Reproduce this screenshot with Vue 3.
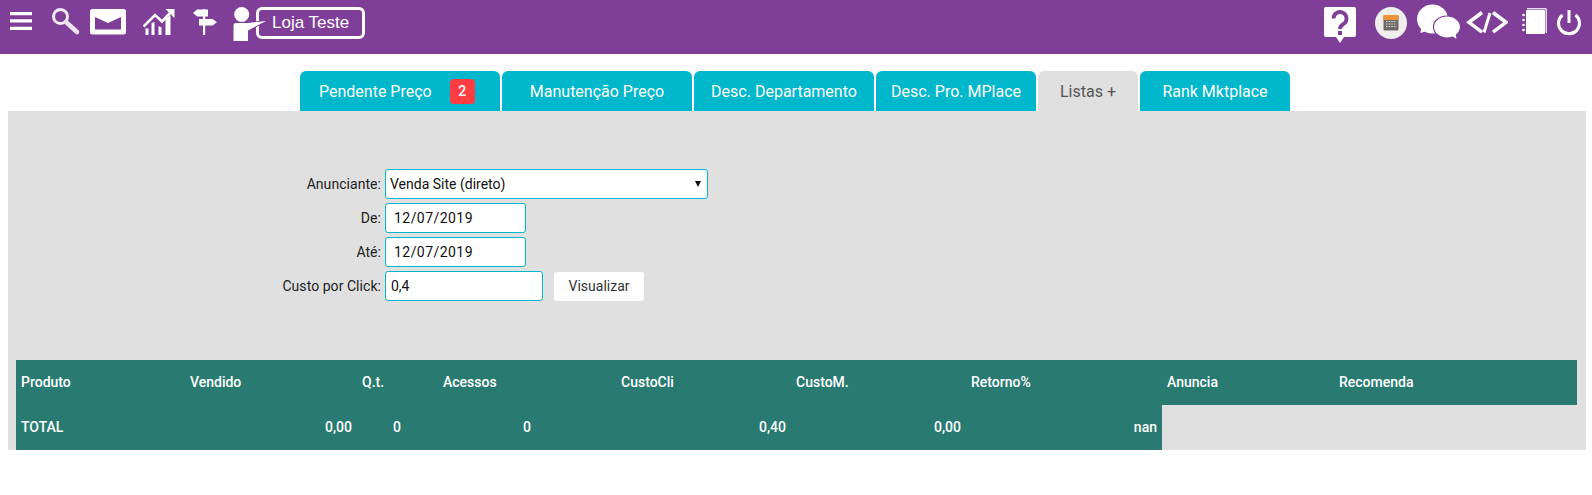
<script setup>
const tabs = [
  { label: 'Pendente Preço', width: 200, badge: '2' },
  { label: 'Manutenção Preço', width: 190 },
  { label: 'Desc. Departamento', width: 180 },
  { label: 'Desc. Pro. MPlace', width: 160 },
  { label: 'Listas +', width: 100, active: true },
  { label: 'Rank Mktplace', width: 150 },
]
const heads = [
  ['Produto', 169], ['Vendido', 172], ['Q.t.', 81], ['Acessos', 178], ['CustoCli', 175],
  ['CustoM.', 175], ['Retorno%', 196], ['Anuncia', 172], ['Recomenda', 243],
]
const totals = [
  ['TOTAL', 'left'], ['0,00', 'num'], ['0', 'num qt'], ['0', 'num ac'],
  ['0,40', 'num'], ['0,00', 'num'], ['nan', 'num last'],
]
</script>

<template>
  <div class="page">
    <header class="topbar">
      <div class="group">
        <svg class="ic" width="22" height="54" viewBox="10 0 22 54"><path d="M10 12h22v3.200H10zM10 19.300h22v3.200H10zM10 26.800h22v3.200H10z" fill="#fff"/></svg>
        <svg class="ic ml19" width="30" height="54" viewBox="51 0 30 54"><circle cx="60.500" cy="16.500" r="7" fill="none" stroke="#f3ecf5" stroke-width="3"/><path d="M66 22l11 10" stroke="#ece2f0" stroke-width="4.500" stroke-linecap="round"/></svg>
        <svg class="ic ml9" width="36" height="54" viewBox="90 0 36 54"><rect x="90" y="9" width="36" height="25.500" rx="2.500" fill="#fff"/><path d="M95 17l13 6 13-6v12.500H95z" fill="#7f3f98"/></svg>
        <svg class="ic ml17" width="32" height="54" viewBox="143 0 32 54"><path d="M145.500 35v-6.500h3V35zM151.500 35V23l3-1V35zM158.500 35V26l3 1.500V35zM165.500 35V19l5-4V35z" fill="#fff"/><path d="M143.500 26.500l11.500-11.500 7 6.500 9.500-10" fill="none" stroke="#fff" stroke-width="2.600"/><path d="M165.500 9h9v9z" fill="#fff"/></svg>
        <svg class="ic ml17" width="26" height="54" viewBox="192 0 26 54"><path d="M203 9h2.200v26H203z" fill="#fff"/><path d="M193 13l4-3.500h11v7h-11zM199 19h13.500l4.500 3.200-4.500 3.300H199z" fill="#fff"/></svg>
        <div class="store">
          <svg class="person" width="36" height="54" viewBox="232 0 36 54"><circle cx="241.700" cy="14.500" r="7.500" fill="#fff"/><path d="M233.500 25.500q0-2.500 2.500-2.500h12l18-2-18 9.500V41h-14.500z" fill="#fff" stroke="#7f3f98" stroke-width="1.500" paint-order="stroke"/></svg>
          <span class="storebox">Loja Teste</span>
        </div>
      </div>
      <div class="group">
        <svg class="ic" width="32" height="54" viewBox="1324 0 32 54"><path d="M1326 7h28q2 0 2 2v26q0 2-2 2h-10l-4 6-4-6h-10q-2 0-2-2V9q0-2 2-2z" fill="#fff"/><path d="M1333.500 18.500a6.500 6.500 0 1 1 10 5.500c-2.500 1.500-3.500 2.500-3.500 5" fill="none" stroke="#7f3f98" stroke-width="3.800"/><rect x="1338" y="31" width="4" height="4" fill="#7f3f98"/></svg>
        <svg class="ic ml19" width="33" height="54" viewBox="1375 0 33 54"><circle cx="1391" cy="23" r="16" fill="#f1efec"/><rect x="1383.500" y="15.500" width="15" height="15" rx="1" fill="#6e6a66"/><rect x="1383.500" y="15" width="15" height="5" fill="#f0923a"/><path d="M1386 21.500h10.500M1386 24h10.500M1386 26.500h10.500" stroke="#d8d5d0" stroke-width="1.100" stroke-dasharray="1.600 1"/></svg>
        <svg class="ic ml9" width="44" height="54" viewBox="1417 0 44 54"><ellipse cx="1432.500" cy="19" rx="15.500" ry="14.500" fill="#fff"/><path d="M1421 28l-.5 5 7.500-2.500z" fill="#fff"/><ellipse cx="1447" cy="27" rx="13.500" ry="11" fill="#fff" stroke="#7f3f98" stroke-width="1.200"/><path d="M1452 36l4.500 3-1-6z" fill="#fff"/></svg>
        <svg class="ic ml5" width="42" height="54" viewBox="1466 0 42 54"><path d="M1482 12.500l-13 9.800 13 9.800M1493 12.500l13 9.800-13 9.800" fill="none" stroke="#fff" stroke-width="3.500"/><path d="M1490 13l-6 19.500" stroke="#fff" stroke-width="3"/></svg>
        <svg class="ic ml14" width="26" height="54" viewBox="1522 0 26 54"><path d="M1527 8h18.500q1.500 0 1.500 1.500V33h-1.500V9.500H1527z" fill="#e6d9ea"/><rect x="1526" y="10" width="19" height="24" rx="1" fill="#fff"/><circle cx="1523.500" cy="15" r="1.300" fill="#fff"/><circle cx="1523.500" cy="20" r="1.300" fill="#fff"/><circle cx="1523.500" cy="25" r="1.300" fill="#fff"/><circle cx="1523.500" cy="30" r="1.300" fill="#fff"/></svg>
        <svg class="ic ml10" width="26" height="54" viewBox="1556 0 26 54"><path d="M1562.500 15a10.500 10.500 0 1 0 13 0" fill="none" stroke="#fff" stroke-width="3"/><path d="M1569 10v13" stroke="#fff" stroke-width="3"/></svg>
      </div>
    </header>

    <nav class="tabs">
      <div
        v-for="t in tabs"
        :key="t.label"
        class="tab"
        :class="{ active: t.active, hasbadge: t.badge }"
        :style="{ width: t.width + 'px' }"
      >
        <span>{{ t.label }}</span>
        <span v-if="t.badge" class="badge">{{ t.badge }}</span>
      </div>
    </nav>

    <section class="panel">
      <form class="form" @submit.prevent>
        <label>Anunciante:</label>
        <div class="selwrap">
          <select class="field sel"><option>Venda Site (direto)</option></select>
        </div>
        <label>De:</label>
        <input class="field date" value="12/07/2019" />
        <label>Até:</label>
        <input class="field date" value="12/07/2019" />
        <label>Custo por Click:</label>
        <div class="row">
          <input class="field cost" value="0,4" />
          <button class="btn" type="button">Visualizar</button>
        </div>
      </form>

      <table class="grid">
        <colgroup><col v-for="h in heads" :key="h[0]" :style="{ width: h[1] + 'px' }" /></colgroup>
        <thead><tr><th v-for="h in heads" :key="h[0]">{{ h[0] }}</th></tr></thead>
        <tbody><tr><td v-for="(c, i) in totals" :key="i" :class="c[1]">{{ c[0] }}</td></tr></tbody>
      </table>
    </section>
  </div>
</template>

<style scoped>
.page { width: 1592px; height: 495px; background: #fff; font-family: Roboto, "Liberation Sans", sans-serif; overflow: hidden; }
.topbar { height: 54px; background: #7f3f98; display: flex; justify-content: space-between; padding: 0 10px; box-sizing: border-box; }
.group { display: flex; }
.ic { display: block; flex: none; }
.ml5 { margin-left: 5px; }
.ml9 { margin-left: 9px; }
.ml10 { margin-left: 8px; }
.ml14 { margin-left: 14px; }
.ml17 { margin-left: 17px; }
.ml19 { margin-left: 19px; }
.store { display: flex; position: relative; margin-left: 14px; padding-left: 24px; height: 54px; }
.person { position: absolute; left: 0; top: 0; z-index: 1; }
.storebox { width: 109px; height: 32px; margin-top: 7px; box-sizing: border-box; border: 3px solid #fff; border-radius: 6px; color: #fff; font: 17px/26px "Liberation Sans", Arial, sans-serif; padding-left: 13px; }
.tabs { display: flex; gap: 2px; padding: 17px 0 0 300px; }
.tab { height: 40px; box-sizing: border-box; background: #00b7cc; color: #fff; font-size: 16px; border-radius: 6px 6px 0 0; display: flex; align-items: center; justify-content: center; }
.tab.hasbadge { justify-content: flex-start; padding-left: 19px; gap: 18px; }
.tab.active { background: #e0e0e0; color: #555; }
.badge { width: 25px; height: 25px; background: #ff3d42; border-radius: 4px; font-size: 14px; font-weight: 500; display: flex; align-items: center; justify-content: center; }
.panel { margin: 0 6px 0 8px; height: 339px; background: #e0e0e0; padding: 58px 9px 0 8px; box-sizing: border-box; }
.form { display: grid; grid-template-columns: 365px auto; justify-content: start; column-gap: 4px; row-gap: 4px; align-items: center; font-size: 14px; color: #222; }
.form label { text-align: right; letter-spacing: .05px; }
.field { height: 30px; box-sizing: border-box; border: 1px solid #00b7cc; border-radius: 3px; background: #fff; color: #111; font: 14px Roboto, sans-serif; outline: none; }
.selwrap { position: relative; width: 323px; height: 30px; }
.selwrap::after { content: ""; position: absolute; right: 7px; top: 12px; border-left: 3.5px solid transparent; border-right: 3.5px solid transparent; border-top: 6px solid #111; pointer-events: none; }
.sel { display: block; width: 100%; padding: 0 4px; appearance: none; -webkit-appearance: none; }
.date { width: 141px; padding: 0 8px; letter-spacing: .45px; }
.cost { width: 158px; padding: 0 5px; }
.row { display: flex; align-items: center; gap: 11px; }
.btn { width: 90px; height: 29px; border: 0; border-radius: 3px; background: #fff; color: #333; font: 14px Roboto, sans-serif; }
.grid { margin-top: 59px; width: 1561px; table-layout: fixed; border-collapse: collapse; font-size: 14px; font-weight: 500; color: #fff; }
.grid th, .grid td { height: 45px; padding: 0 5px 2px; background: #297b72; text-align: left; font-weight: 500; box-sizing: border-box; }
.grid td.num { text-align: right; }
.grid td.qt { padding-right: 37px; }
.grid td.ac { padding-right: 85px; }
.grid td.last { padding-right: 5px; }
</style>
